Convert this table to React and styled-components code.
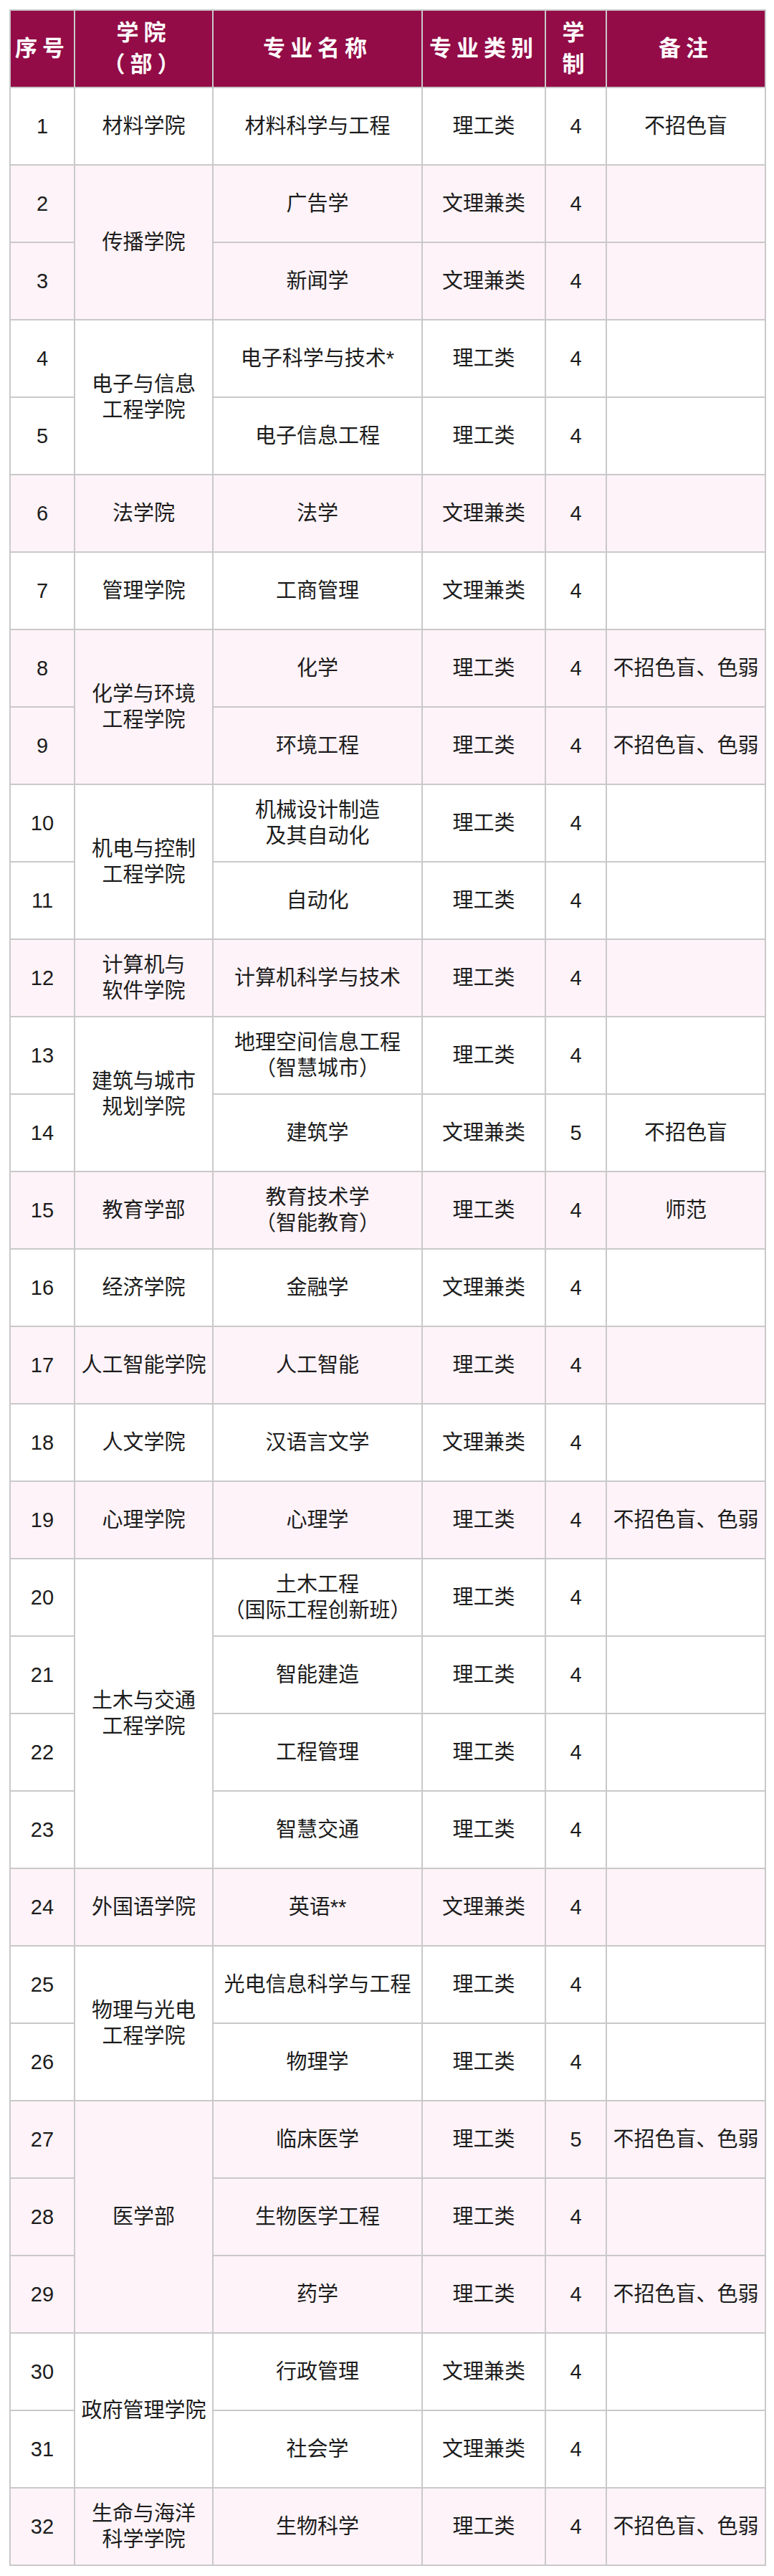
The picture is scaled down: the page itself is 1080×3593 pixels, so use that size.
import React from "react";
import styled, { createGlobalStyle } from "styled-components";

const GlobalStyle = createGlobalStyle`
  html, body {
    margin: 0;
    padding: 0;
    background: #ffffff;
  }
  body {
    font-family: "Liberation Sans", "Noto Sans CJK SC", sans-serif;
    color: #1c1c1c;
  }
`;

const Page = styled.div`
  padding: 13px 13px 14px 13px;
  width: 1080px;
  box-sizing: border-box;
`;

const Table = styled.table`
  width: 1054px;
  table-layout: fixed;
  border-collapse: collapse;
  border: 2px solid #c9c9c9;
`;

const Column = styled.col`
  width: ${(p) => p.$w}px;
`;

const HeadCell = styled.th`
  height: 108px;
  box-sizing: border-box;
  background: #930c47;
  color: #ffffff;
  font-size: 31px;
  font-weight: 700;
  line-height: 44px;
  letter-spacing: 7px;
  padding: 0;
  text-align: center;
  vertical-align: middle;
  border: 2px solid #c9c9c9;
`;

const Cell = styled.td`
  height: 108px;
  box-sizing: border-box;
  background: ${(p) => (p.$pink ? "#fef3f8" : "#ffffff")};
  font-size: 29px;
  line-height: 36px;
  padding: 0 2px;
  text-align: center;
  vertical-align: middle;
  border: 2px solid #c9c9c9;
  white-space: nowrap;
`;

const Lines = ({ text }) => {
  const parts = text.split("\n");
  return parts.map((t, i) => (
    <React.Fragment key={i}>
      {i > 0 && <br />}
      {t}
    </React.Fragment>
  ));
};

const groups = [
  { college: "材料学院", rows: [["材料科学与工程", "理工类", "4", "不招色盲"]] },
  {
    college: "传播学院",
    rows: [
      ["广告学", "文理兼类", "4", ""],
      ["新闻学", "文理兼类", "4", ""],
    ],
  },
  {
    college: "电子与信息\n工程学院",
    rows: [
      ["电子科学与技术*", "理工类", "4", ""],
      ["电子信息工程", "理工类", "4", ""],
    ],
  },
  { college: "法学院", rows: [["法学", "文理兼类", "4", ""]] },
  { college: "管理学院", rows: [["工商管理", "文理兼类", "4", ""]] },
  {
    college: "化学与环境\n工程学院",
    rows: [
      ["化学", "理工类", "4", "不招色盲、色弱"],
      ["环境工程", "理工类", "4", "不招色盲、色弱"],
    ],
  },
  {
    college: "机电与控制\n工程学院",
    rows: [
      ["机械设计制造\n及其自动化", "理工类", "4", ""],
      ["自动化", "理工类", "4", ""],
    ],
  },
  { college: "计算机与\n软件学院", rows: [["计算机科学与技术", "理工类", "4", ""]] },
  {
    college: "建筑与城市\n规划学院",
    rows: [
      ["地理空间信息工程\n（智慧城市）", "理工类", "4", ""],
      ["建筑学", "文理兼类", "5", "不招色盲"],
    ],
  },
  { college: "教育学部", rows: [["教育技术学\n（智能教育）", "理工类", "4", "师范"]] },
  { college: "经济学院", rows: [["金融学", "文理兼类", "4", ""]] },
  { college: "人工智能学院", rows: [["人工智能", "理工类", "4", ""]] },
  { college: "人文学院", rows: [["汉语言文学", "文理兼类", "4", ""]] },
  { college: "心理学院", rows: [["心理学", "理工类", "4", "不招色盲、色弱"]] },
  {
    college: "土木与交通\n工程学院",
    rows: [
      ["土木工程\n（国际工程创新班）", "理工类", "4", ""],
      ["智能建造", "理工类", "4", ""],
      ["工程管理", "理工类", "4", ""],
      ["智慧交通", "理工类", "4", ""],
    ],
  },
  { college: "外国语学院", rows: [["英语**", "文理兼类", "4", ""]] },
  {
    college: "物理与光电\n工程学院",
    rows: [
      ["光电信息科学与工程", "理工类", "4", ""],
      ["物理学", "理工类", "4", ""],
    ],
  },
  {
    college: "医学部",
    rows: [
      ["临床医学", "理工类", "5", "不招色盲、色弱"],
      ["生物医学工程", "理工类", "4", ""],
      ["药学", "理工类", "4", "不招色盲、色弱"],
    ],
  },
  {
    college: "政府管理学院",
    rows: [
      ["行政管理", "文理兼类", "4", ""],
      ["社会学", "文理兼类", "4", ""],
    ],
  },
  { college: "生命与海洋\n科学学院", rows: [["生物科学", "理工类", "4", "不招色盲、色弱"]] },
];

const widths = [90, 193, 292, 172, 85, 222];

export default function App() {
  let n = 0;
  return (
    <Page>
      <GlobalStyle />
      <Table>
        <colgroup>
          {widths.map((w, i) => (
            <Column key={i} $w={w} />
          ))}
        </colgroup>
        <thead>
          <tr>
            <HeadCell>序号</HeadCell>
            <HeadCell>
              学院
              <br />
              （部）
            </HeadCell>
            <HeadCell>专业名称</HeadCell>
            <HeadCell>专业类别</HeadCell>
            <HeadCell>
              学
              <br />
              制
            </HeadCell>
            <HeadCell>备注</HeadCell>
          </tr>
        </thead>
        <tbody>
          {groups.map((g, gi) => {
            const pink = gi % 2 === 1;
            return g.rows.map((r, ri) => {
              n += 1;
              return (
                <tr key={n}>
                  <Cell $pink={pink}>{n}</Cell>
                  {ri === 0 && (
                    <Cell $pink={pink} rowSpan={g.rows.length}>
                      <Lines text={g.college} />
                    </Cell>
                  )}
                  <Cell $pink={pink}>
                    <Lines text={r[0]} />
                  </Cell>
                  <Cell $pink={pink}>{r[1]}</Cell>
                  <Cell $pink={pink}>{r[2]}</Cell>
                  <Cell $pink={pink}>{r[3]}</Cell>
                </tr>
              );
            });
          })}
        </tbody>
      </Table>
    </Page>
  );
}
